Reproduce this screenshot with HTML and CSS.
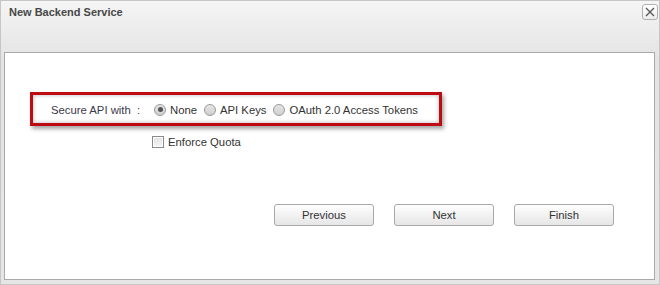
FILE: index.html
```html
<!DOCTYPE html>
<html lang="en">

<head>
    <meta charset="UTF-8">
    <link rel="stylesheet" href="styles.css">
    <title>New Backend Service</title>
</head>

<body>
    <!-- dialog -->
    <div class="dialog">
        <div class="dialog-header">
            <span class="dialog-title">New Backend Service</span>
            <button class="close-btn" type="button" title="Close">
                <svg width="10" height="10" viewBox="0 0 10 10">
                    <path d="M1 1 L9 9 M9 1 L1 9" stroke="#555" stroke-width="1.3" fill="none" />
                </svg>
            </button>
        </div>

        <div class="dialog-body">
            <!-- security row -->
            <div class="secure-box">
                <span class="secure-label">Secure API with&nbsp;&nbsp;:</span>
                <label class="option"><input type="radio" name="secure" checked> None</label>
                <label class="option"><input type="radio" name="secure"> API Keys</label>
                <label class="option"><input type="radio" name="secure"> OAuth 2.0 Access Tokens</label>
            </div>

            <div class="quota-row">
                <label class="option"><input type="checkbox"> Enforce Quota</label>
            </div>

            <!-- wizard buttons -->
            <div class="button-row">
                <button type="button" class="wiz-btn">Previous</button>
                <button type="button" class="wiz-btn">Next</button>
                <button type="button" class="wiz-btn">Finish</button>
            </div>
        </div>
    </div>
</body>

</html>
```

FILE: styles.css
```css
/* page */
body {
    margin: 0;
    font-family: "Liberation Sans", Arial, sans-serif;
    font-size: 11.3px;
    color: #333;
}

/* dialog frame */
.dialog {
    box-sizing: border-box;
    width: 660px;
    height: 285px;
    border: 1px solid #c6c6c6;
    background: linear-gradient(#f5f5f5, #e3e3e3 60px, #e6e6e6);
    display: flex;
    flex-direction: column;
    padding: 0 4px 4px 3px;
}

.dialog-header {
    height: 51px;
    display: flex;
    justify-content: space-between;
    align-items: flex-start;
}

.dialog-title {
    font-weight: bold;
    font-size: 11px;
    color: #474747;
    margin: 5px 0 0 5px;
}

.close-btn {
    box-sizing: border-box;
    width: 16px;
    height: 16px;
    margin: 3px -3px 0 0;
    padding: 0;
    border: 1px solid #b0b0b0;
    border-radius: 3px;
    background: linear-gradient(#ffffff, #ececec);
    display: flex;
    align-items: center;
    justify-content: center;
}

/* white content panel */
.dialog-body {
    flex: 1;
    background: #fff;
    border: 1px solid #a9a9a9;
    padding: 39px 0 0 25px;
}

.secure-box {
    box-sizing: border-box;
    width: 412px;
    height: 34px;
    border: 3px solid #bd0a13;
    box-shadow: 2px 3px 4px rgba(0, 0, 0, 0.35), inset 0 0 4px rgba(0, 0, 0, 0.3);
    display: flex;
    align-items: center;
    padding-left: 18px;
    padding-top: 1px;
    white-space: nowrap;
}

.secure-label {
    flex-shrink: 0;
    width: 103px;
    color: #3a3a4a;
}

.option {
    flex-shrink: 0;
    display: inline-flex;
    align-items: center;
    margin-right: 7px;
    color: #333;
    white-space: nowrap;
}

/* radio look */
.option input[type="radio"] {
    appearance: none;
    flex-shrink: 0;
    width: 12px;
    height: 12px;
    margin: 0 4px 0 0;
    border: 1px solid #9a9a9a;
    border-radius: 50%;
    background: linear-gradient(#e6e6e6, #cfcfcf);
    position: relative;
}

.option input[type="radio"]:checked::after {
    content: "";
    position: absolute;
    left: 2.5px;
    top: 2.5px;
    width: 5px;
    height: 5px;
    border-radius: 50%;
    background: #555;
}

/* checkbox look */
.option input[type="checkbox"] {
    appearance: none;
    flex-shrink: 0;
    box-sizing: border-box;
    width: 12px;
    height: 12px;
    margin: 0 4px 0 0;
    border: 1px solid #8a8a8a;
    background: linear-gradient(#e4e4e4, #f4f4f4);
    box-shadow: inset 0 0 0 1px #fff;
}

.quota-row {
    display: flex;
    margin: 10px 0 0 122px;
}

.button-row {
    display: flex;
    gap: 20px;
    margin: 56px 0 0 244px;
}

.wiz-btn {
    width: 100px;
    height: 22px;
    border: 1px solid #a8a8a8;
    border-radius: 3px;
    background: linear-gradient(#fefefe, #e6e6e6);
    font-family: inherit;
    font-size: 11.3px;
    color: #333;
    padding: 0;
}
```
